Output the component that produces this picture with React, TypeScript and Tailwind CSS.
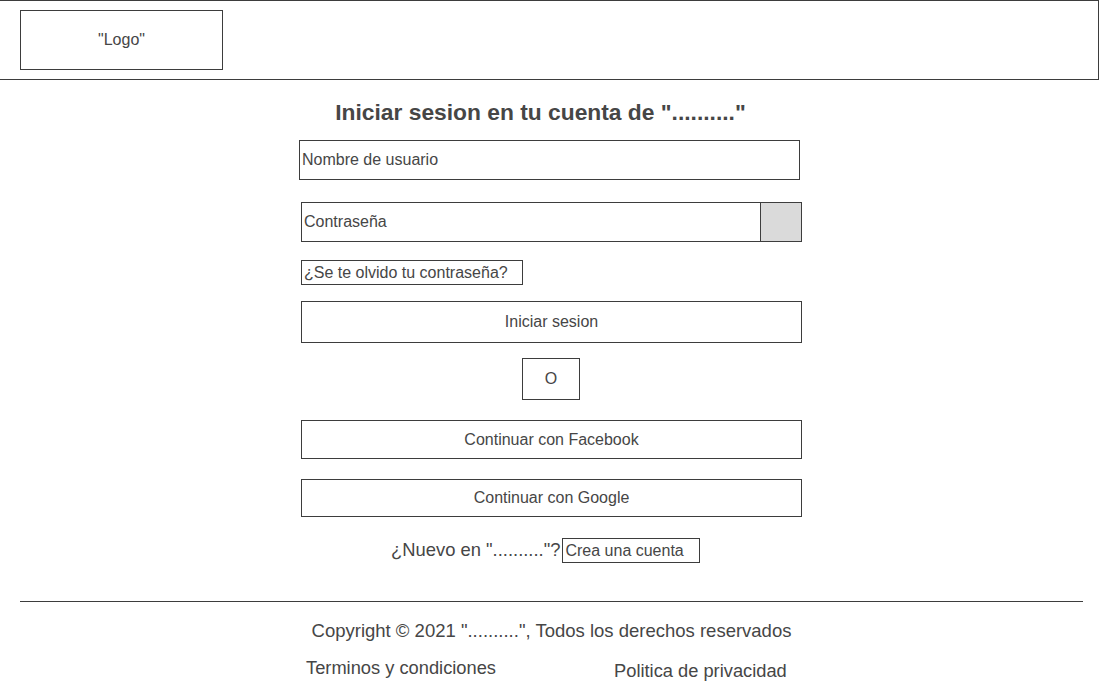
import React from 'react';

const line = 'border border-[#3d3d3d]';

const App: React.FC = () => {
  return (
    <div className="w-[1099px] h-[700px] overflow-hidden bg-white text-[#464646] font-['Liberation_Sans',Arial,sans-serif]">
      <header className="h-[80px] border-t border-r border-b border-[#3d3d3d] pt-[9px] pl-[20px]">
        <div className={`${line} w-[203px] h-[60px] flex items-center justify-center text-base`}>"Logo"</div>
      </header>

      <main className="ml-[301px] w-[501px] flex flex-col">
        <h1 className="mt-[19px] w-[479px] text-center text-[22.8px] font-bold leading-[26px]">
          Iniciar sesion en tu cuenta de ".........."
        </h1>

        <div className={`${line} mt-[15px] -ml-[2px] w-[501px] h-[40px] flex items-center pl-[2px] text-base`}>
          Nombre de usuario
        </div>

        <div className={`${line} mt-[22px] w-[501px] h-[40px] flex text-base`}>
          <div className="flex-1 flex items-center pl-[2px]">Contraseña</div>
          <div className="w-[41px] border-l border-[#3d3d3d] bg-[#dadada]" />
        </div>

        <div className={`${line} mt-[18px] w-[222px] h-[25px] flex items-center pl-[2px] text-base`}>
          ¿Se te olvido tu contraseña?
        </div>

        <button className={`${line} mt-[16px] w-[501px] h-[42px] text-base`}>Iniciar sesion</button>

        <button className={`${line} mt-[15px] ml-[221px] w-[58px] h-[42px] text-base`}>O</button>

        <button className={`${line} mt-[20px] w-[501px] h-[39px] text-base`}>Continuar con Facebook</button>

        <button className={`${line} mt-[20px] w-[501px] h-[38px] text-base`}>Continuar con Google</button>

        <div className="mt-[21px] h-[25px] flex items-center">
          <span className="ml-[90px] text-[18.4px] leading-[25px] -mt-[3px]">¿Nuevo en ".........."?</span>
          <div className={`${line} ml-[2px] w-[138px] h-[25px] flex items-center pl-[2px] text-base`}>
            Crea una cuenta
          </div>
        </div>
      </main>

      <footer className="flex flex-col">
        <div className="mt-[38px] ml-[20px] w-[1063px] h-px bg-[#3d3d3d]" />
        <p className="mt-[18px] ml-[301px] w-[501px] text-center text-[18.5px] leading-[21px]">
          Copyright © 2021 "..........", Todos los derechos reservados
        </p>
        <div className="flex items-start ml-[306px] text-[18.3px] leading-[21px]">
          <span className="mt-[16px]">Terminos y condiciones</span>
          <span className="mt-[19px] ml-[118px]">Politica de privacidad</span>
        </div>
      </footer>
    </div>
  );
};

export default App;
